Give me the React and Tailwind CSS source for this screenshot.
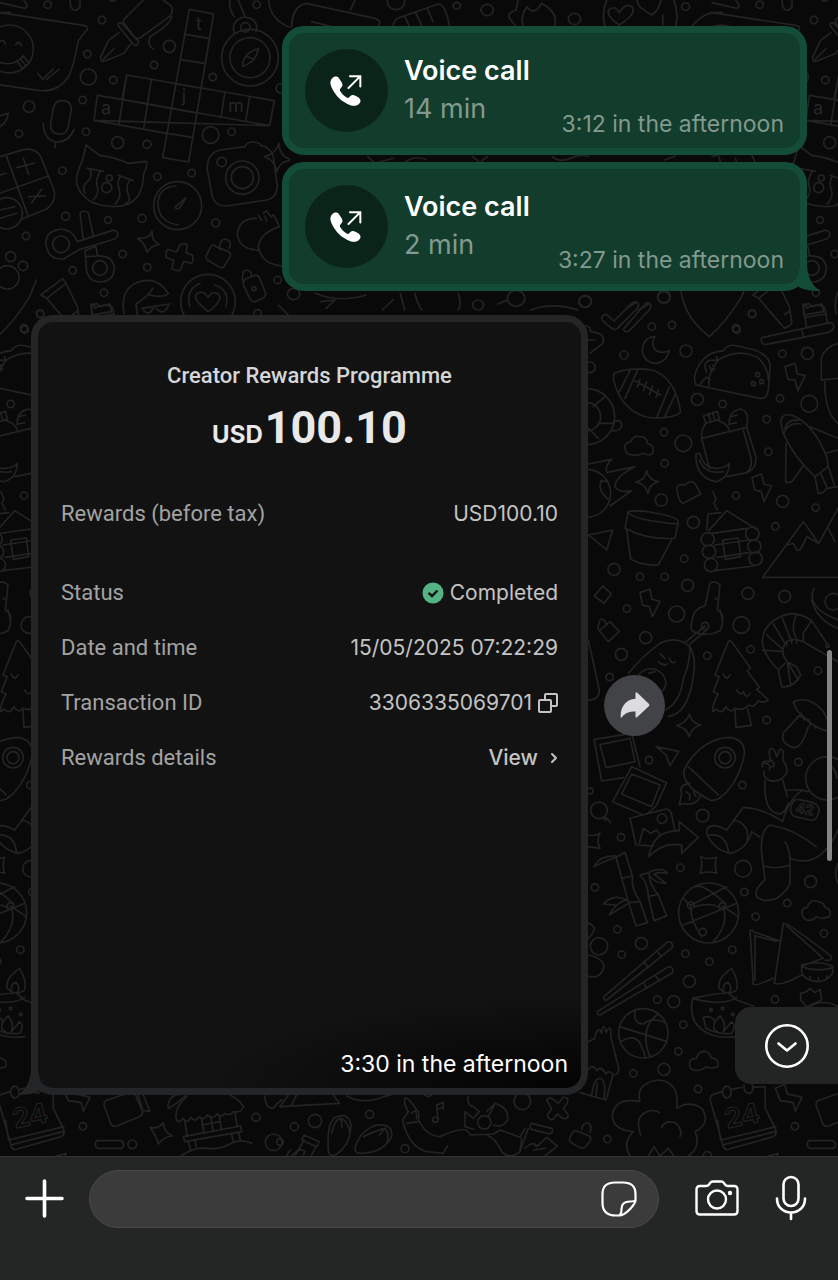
import { ChevronRight } from 'lucide-react'

const CALLS = [
  { id: 1, duration: '14 min', time: '3:12 in the afternoon' },
  { id: 2, duration: '2 min', time: '3:27 in the afternoon' },
]

// Wallpaper doodles, grouped by area. Every area has its own origin and scale.
const AREAS = [
  {
    id: 'top-left',
    transform: 'scale(.3333)',
    dots: [
      [143, 14, 11], [306, 60, 11], [262, 162, 11], [265, 231, 24], [340, 240, 11], [248, 300, 11],
      [87, 320, 17], [57, 401, 11], [258, 395, 11], [353, 428, 18], [441, 433, 12], [462, 195, 11],
      [508, 139, 18], [638, 231, 11], [632, 405, 25], [695, 395, 11], [770, 14, 11], [472, 530, 11],
      [575, 519, 11], [187, 512, 11], [197, 649, 12], [324, 660, 10], [426, 655, 12], [647, 669, 12],
      [78, 708, 11], [368, 762, 11], [218, 811, 11], [442, 802, 11], [312, 878, 11], [120, 941, 11],
      [773, 940, 11], [833, 840, 11], [72, 985, 11], [665, 486, 14], [28, 147, 72], [750, 173, 85],
      [750, 173, 60], [736, 82, 14], [727, 533, 50], [727, 533, 33], [533, 617, 72], [183, 733, 25],
      [300, 804, 22], [22, 832, 35], [32, 770, 15], [69, 798, 14], [20, 640, 47], [624, 905, 82],
      [842, 265, 14], [320, 563, 15], [328, 534, 9], [762, 866, 6],
    ],
    paths: [
      // speech bubble with a laughing face
      'M-5 37L255 77Q265 80 262 88L235 122Q220 200 208 225Q180 275 120 272L-5 254',
      'M0 125Q12 115 16 133M47 135Q58 118 64 138M0 188Q40 200 70 168M52 185L68 206M62 178L78 198M70 168L86 188M113 220L128 238L160 207M139 239L177 208',
      // fountain pen
      'M430 0L372 58Q368 66 375 74L405 112Q412 118 420 114L508 50Q520 40 515 20L490 0M357 80Q350 68 364 68L416 125Q412 142 400 133ZM357 98L325 122L302 172Q300 188 315 183L372 160L392 132M310 178L342 146M515 50Q510 75 450 110Q440 135 460 147',
      // crossword
      'M568 28L641 42L566 486L488 473ZM556 103L627 115M542 179L612 190M529 252L600 264M516 326L588 339M503 400L576 412M380 225L823 302L809 377L282 361L292 286L366 298M380 225L366 298L809 377M380 225L357 372M454 238L431 385M675 276L663 352M749 289L737 364M282 361L500 400M366 298L516 326',
      // microphone
      'M185 302Q218 302 213 335L205 380Q200 405 175 402Q148 398 152 370L160 325Q165 302 185 302M130 370Q130 420 170 426Q205 428 222 388M167 427L164 444',
      // compass ring and needle
      'M703 100Q695 75 712 60Q735 42 760 60Q775 75 768 95M703 50Q685 25 690 0M735 50L715 0M775 146Q770 185 728 199Q728 160 775 146M738 168L762 178',
      // calculator keys
      'M0 470L70 449Q105 442 122 470L162 570Q170 605 140 627L65 658M20 470L85 650M0 580L145 528M50 503L104 489M70 475L86 523M85 590L137 588M95 608L125 568M0 525L18 520M0 630L45 620M0 655L50 640M-4 348L25 340Q20 370 -4 382',
      // cat face
      'M258 435L300 467Q340 470 385 490L440 484Q442 500 430 525Q430 590 385 612Q340 630 275 607Q225 575 230 530Q235 505 248 480Q255 455 258 435M262 505L310 514M355 526L400 542M270 508Q280 530 262 545T255 580M300 514Q285 540 292 560T280 600M360 530Q350 550 358 570T345 612M388 542Q375 565 385 585T375 612',
      // camera
      'M660 450L735 440Q740 425 760 426T782 437Q810 440 820 470L832 560Q830 595 800 600L680 618Q645 618 637 590L622 510Q620 460 660 450M838 430Q835 465 870 478M838 430Q825 465 793 470Q825 480 830 515Q840 485 868 482',
      // stopwatch
      'M528 558Q480 560 474 605Q472 665 535 675M557 594L525 622Q530 630 540 623L557 594',
      // scissors
      'M240 640Q250 628 265 638L280 708M240 640L250 720M232 725L335 692Q355 688 353 708Q350 715 335 720L240 748M232 725Q215 685 178 688Q135 695 138 735Q145 780 190 777L240 748M255 752L288 738L292 768M255 752L260 815Q270 848 305 846Q345 840 343 800Q335 765 292 768L258 770',
      // sparkle, cross, tags and padlock
      'M456 693Q455 725 478 733Q450 738 442 757Q435 730 412 715Q450 718 456 693',
      'M540 735Q552 728 562 735L558 758L578 766Q582 778 575 790L550 785L542 810Q530 815 515 806L522 782L498 772Q496 760 502 748L530 756Z',
      'M660 750Q655 720 675 717Q698 722 688 745M634 738Q640 730 648 740L685 755Q695 760 690 770L672 800Q665 806 656 800L622 780Q615 772 620 765Z',
      'M728 840Q725 812 740 810Q755 812 755 828M735 838L765 826Q775 824 779 835L797 880Q797 890 788 895L765 905Q755 906 750 897L730 855Q728 845 735 838',
      // garlic
      'M770 655Q715 655 712 705Q720 750 775 750M790 640L800 632L812 650L822 645L838 680Q780 700 775 740Q785 795 850 798M775 645L785 660M795 648L800 665',
      // cup
      'M122 885L188 836L198 850L140 895ZM140 895L200 965L218 985Q230 980 240 970L232 920L198 850M218 945L230 935',
      // person and heart badge
      'M372 940Q360 870 410 848Q470 825 505 880Q490 895 450 885M458 865Q450 885 408 912L412 945M425 925L510 912M430 930Q445 950 460 925M468 925Q490 950 505 918M275 920L290 910L300 920L330 912L335 935L275 945Z',
      'M600 850Q555 870 570 920M645 855Q690 870 678 920M624 935Q575 895 590 882Q610 868 624 892Q640 868 658 885Q668 905 624 935',
      'M806 0Q810 60 870 82M210 0L212 20Q225 42 240 20V0M0 8L75 25Q90 20 70 0M325 -4Q338 12 352 -4M835 915L870 950',
    ],
  },
  {
    id: 'top',
    transform: 'translate(270) scale(.362 .3333)',
    dots: [
      [348, 5, 24], [516, 17, 10], [600, 30, 17], [841, 57, 17], [1148, 20, 11],
      [65, 882, 17], [575, 915, 15], [870, 905, 17], [1088, 892, 17], [680, 895, 24],
    ],
    paths: [
      'M60 80Q60 20 100 10L290 55Q310 65 300 75M115 65L170 80M235 0L222 30',
      'M340 80Q340 60 360 52L465 12Q485 15 495 75M372 48L385 80M402 38L420 78M435 25L450 65',
      'M665 60Q650 40 680 30L685 0M700 80Q690 50 710 20Q730 50 750 10Q800 40 785 80M665 60L680 80',
      'M925 80Q915 40 930 0M1120 80Q1130 40 1115 0M965 75Q925 45 937 28Q955 15 965 38Q980 8 1000 20Q1015 40 965 75M1055 45Q1010 20 1015 0M1085 75V45M1055 45Q1075 30 1080 0',
      'M1165 80Q1200 30 1250 38M270 470L290 490L340 475M370 488Q400 465 430 478M560 470L580 488L600 470M780 470Q800 490 830 475T880 470M1090 480L1120 468',
      'M125 880Q190 910 265 885M140 905L180 900L155 925M360 880L372 930M400 880Q410 920 420 930M520 880Q530 910 520 930M630 912L655 900M720 930Q780 905 850 930M985 925L1010 908M1020 930L1048 910M310 930L340 900',
    ],
  },
  {
    id: 'right-upper',
    transform: 'translate(580 290) scale(.3333)',
    dots: [
      [16, 34, 18], [252, 20, 19], [215, 110, 11], [276, 105, 11], [132, 195, 12], [318, 183, 18],
      [517, 72, 11], [470, 119, 11], [607, 191, 11], [682, 190, 18], [352, 328, 18], [428, 342, 11],
      [252, 427, 11], [310, 460, 25], [254, 520, 11], [560, 388, 11], [565, 485, 11], [600, 325, 11],
      [688, 341, 25], [468, 617, 11], [608, 634, 18], [707, 653, 11], [244, 630, 18], [340, 697, 18],
      [586, 709, 11], [313, 806, 11], [102, 838, 18], [180, 860, 11], [254, 860, 11], [323, 886, 18],
      [504, 910, 18], [614, 919, 18], [141, 956, 11], [290, 972, 24], [760, 935, 25],
      [533, 254, 6], [520, 281, 6], [545, 275, 6], [30, 232, 16], [383, 748, 20], [387, 785, 20],
      [393, 825, 20], [517, 731, 20], [523, 769, 20], [527, 806, 20], [20, 380, 42], [20, 380, 84], [20, 610, 72],
    ],
    paths: [
      // double tick and moon
      'M66 82Q72 68 83 76L102 93L155 40Q168 30 175 42Q178 50 170 57L112 115Q102 122 92 113L68 92Q64 88 66 82M130 118L195 42Q208 34 212 46Q213 53 208 60L148 122Q137 130 130 118',
      'M225 140Q190 142 187 180Q190 218 228 220Q262 215 268 182Q240 195 222 175Q213 155 225 140',
      // paw heel
      'M300 -45Q295 70 388 140Q440 95 485 20L505 -30',
      // toothbrush
      'M545 143L750 98Q765 100 760 115Q755 125 745 127L560 163Q540 165 545 143M665 118L670 138M680 112L668 45Q680 35 680 55Q715 35 735 55L742 98M676 82L738 72',
      // football
      'M103 250Q150 230 215 240Q285 260 302 365Q290 385 215 384Q125 370 100 268ZM152 238L118 305M175 236L135 325M268 292L230 382M285 315L252 384M165 272L242 315M180 268L172 292M200 275L190 302M218 288L208 315M236 298L228 322',
      // taco
      'M348 285Q335 260 360 220Q385 185 430 182Q445 160 475 168T525 180Q575 200 570 235L565 300Q560 328 540 325ZM388 288Q380 255 415 210Q470 175 530 200Q565 230 565 270M360 285Q380 250 390 270M380 245Q365 215 395 210Q415 215 410 200M388 228L396 245M398 225L404 240',
      // bolts
      'M615 230L645 220L652 252L676 256L654 302L645 270L624 268ZM516 563L545 552L552 582L575 588L552 636L543 604L524 600ZM180 908L210 897L216 928L240 934L217 980L208 950L188 946Z',
      // backpack with a banana
      'M370 378L412 364L418 388L378 400ZM385 370L392 396M398 367L405 392M378 400Q362 420 365 445L388 535M365 445L500 412L528 500Q530 535 505 547L440 560M410 390Q445 400 450 425M488 415L512 500Q520 530 500 547M448 405Q445 365 480 357Q510 360 500 412M455 380L472 375M452 402L470 398M348 492L360 490Q370 535 410 535Q435 535 448 520Q445 570 405 575Q345 560 348 492M358 510Q375 555 430 545',
      // cloud and puff
      'M140 490Q125 460 152 455Q160 435 180 440Q200 440 202 460Q225 465 218 490Q205 500 190 490Q165 502 140 490M292 605Q285 580 315 585Q330 570 345 580L362 612L310 640Q295 635 292 605M398 605L408 625L402 640L413 660',
      // shuttle
      'M603 400Q600 370 635 375Q700 400 740 500L745 530L705 560Q640 500 610 430ZM612 430Q625 395 662 402M615 415Q625 385 655 392M690 410L774 445M735 490L774 480M618 460L617 575Q630 582 640 570L668 530M705 560L715 610Q730 612 740 595L774 590M745 530L765 590M722 550L740 590',
      // sparkle and burning ball
      'M200 542Q205 570 235 575Q207 582 204 610Q195 580 167 576Q197 570 200 542',
      'M25 522L95 508Q75 525 80 548L165 530Q105 560 105 590Q120 610 155 602L90 648M65 570Q50 600 85 628M62 574H80',
      // plant pot
      'M145 665Q160 660 210 666Q295 680 295 695L285 745Q200 750 135 715ZM145 668Q160 690 290 702M140 718L152 808Q190 828 235 825L275 750',
      // cabin
      'M380 720L384 672L422 668M386 722L440 662L530 718M395 730L502 715M405 765L505 750M410 802L508 788M405 842L520 828M428 750L475 744L482 800L436 808Z',
      // mountains
      'M774 862H548L670 695L716 760L774 655M622 765L640 760L650 780Q660 790 680 740L716 760M745 715L765 755',
      // small shapes
      'M25 735L98 720L80 780ZM68 888L94 912L72 940L43 918ZM390 880Q405 870 420 885L412 960Q430 970 428 990M390 880L375 948Q340 955 337 990M405 925L415 930M702 895Q675 950 774 990M724 270L774 265M724 270V205Q735 170 774 160M734 275Q735 370 774 400',
      'M0 110Q30 100 32 125Q80 130 68 160L30 190M25 150H45M100 395Q125 385 125 408Q120 425 95 422M20 410L55 445M55 400H103M40 350L75 320',
    ],
  },
  {
    id: 'right-middle',
    transform: 'translate(580 600) scale(.3333)',
    dots: [
      [197, 113, 18], [124, 163, 18], [89, 231, 11], [382, 167, 11], [484, 75, 25], [512, 148, 11],
      [714, 212, 11], [560, 360, 11], [655, 486, 11], [207, 480, 11], [487, 555, 11], [368, 647, 19],
      [123, 712, 11], [301, 803, 11], [489, 806, 25], [493, 876, 11], [692, 845, 18], [622, 909, 11],
      [45, 862, 11], [527, 950, 11], [435, 473, 31], [435, 473, 18], [386, 939, 90], [332, 916, 10],
      [428, 918, 10], [57, 631, 25], [375, 78, 11], [742, 535, 65], [30, 573, 9], [246, 656, 14],
      [743, 137, 5],
    ],
    paths: [
      // guitar and avocado
      'M337 60Q325 95 350 98Q385 110 420 92Q435 70 420 30M375 78L318 125M382 88L330 132',
      'M145 220Q190 165 240 130Q290 105 330 140Q350 170 340 230Q325 340 265 350M330 140Q330 190 310 235Q300 310 255 330M240 160L255 175M268 175Q275 195 285 185M235 185Q250 200 262 192M175 225Q210 190 245 220Q270 250 245 275M205 220L225 215',
      // shrimp
      'M740 130L695 62Q650 30 605 48Q545 75 547 130Q555 170 595 210L605 260Q640 265 662 225L650 200L622 185Q600 160 615 130Q635 110 670 125L774 185M547 150L610 155M560 105L605 145M580 72L615 130M605 48L632 118M650 42Q630 90 650 115M695 62L670 100V125M622 185L632 255M622 185L655 240M595 210L615 190M620 125V138M635 118V130M650 118V130',
      // pine tree
      'M445 125Q450 118 458 130L512 205L502 212L538 262L530 268L565 300Q550 312 535 302Q525 325 505 315Q490 335 465 325Q450 342 438 320Q425 345 410 328L398 335Q398 310 415 282L400 275L418 230L405 225ZM465 330L468 382L514 376L503 328M430 222Q440 245 450 225M470 270Q480 290 490 275Q500 300 510 280',
      // mushroom
      'M640 305Q690 285 730 335Q755 375 745 395Q700 385 650 330ZM665 340L610 398Q600 430 640 443Q665 445 685 380M652 350Q670 345 672 360Q690 350 690 375Q705 370 705 385',
      // photos
      'M42 418L155 400L180 500M42 418L65 543L130 533M60 434L150 415L165 485L78 503ZM155 500L260 548L230 615Q210 640 190 645L98 605ZM155 522L240 555L215 620L125 582ZM150 655L255 628Q270 625 275 645L285 692M150 655L168 735L220 738M178 730L190 685L212 700L230 690L240 705M75 650L92 668M68 655L78 660',
      // arrows and sparkles
      'M228 440L297 454L270 497L258 465ZM206 770Q220 690 298 692V665L355 712L305 760V735Q250 725 206 770M328 343Q335 370 362 375Q335 382 328 410Q318 382 290 377Q318 370 328 343M362 770Q385 780 410 772Q402 795 410 820Q385 812 360 820Q370 795 362 770M25 705Q45 710 60 700Q48 720 60 745L25 740',
      // rocket
      'M320 495Q370 415 450 412Q500 420 492 470Q470 560 415 597L395 602Q305 560 312 510ZM325 500L415 585M330 550Q295 555 305 580L298 615Q310 610 318 612Q350 615 360 590M318 575L330 585L328 600M340 575L348 590',
      // astronaut
      'M548 500Q540 480 570 485L568 450Q580 435 590 470L600 448Q615 445 608 480Q625 500 620 520Q600 550 570 542Q550 535 552 515M552 490Q575 490 568 510M575 480Q590 500 575 500M555 540Q550 640 600 642Q615 640 625 610M608 540L622 590M620 570H665L685 575M665 572Q625 600 608 665Q550 625 490 622L440 690Q380 660 380 700Q400 750 450 760Q500 750 515 695L540 712M460 660Q510 670 502 725M385 705Q440 700 445 755M708 740Q650 690 570 675Q540 690 545 760L555 840Q520 870 530 890Q550 910 590 895Q625 870 630 850V775Q630 750 615 725M552 798Q590 810 630 795M630 775Q720 810 774 690M655 598L700 608Q722 618 715 640Q710 665 690 660L645 650Q625 640 635 615Q640 598 655 598M755 500Q770 515 770 535M774 790Q760 820 774 850',
      // bamboo
      'M108 772L135 757L158 830Q150 860 180 905L202 968L168 978L145 905Q130 850 125 835ZM125 835L158 828M145 908L180 905M42 800Q60 765 108 768V772Q70 785 42 800M180 825L208 818Q205 850 235 885L260 948L222 962L205 890Q205 850 180 825M205 890L235 882M210 815Q250 800 262 820Q240 815 222 822L258 850Q225 850 212 830M70 912Q100 880 140 900Q110 905 88 945L142 912M70 912L105 915',
      // globe and cloud
      'M310 895L332 916L440 860M332 916Q330 960 365 1010M428 918L475 950M342 920Q400 905 420 925M345 860Q370 850 435 910M428 918Q450 970 400 1025M310 975L470 910M672 955Q655 925 682 922Q690 895 715 905Q735 910 733 920Q758 930 748 950Q725 960 710 950Q690 970 672 955',
      // tag and edges
      'M58 68Q60 50 75 62L80 75M58 92L90 65L118 95L85 125ZM58 92Q50 80 58 68M25 120L58 270Q58 300 25 300M695 0Q710 60 774 85',
    ],
  },
  {
    id: 'right-lower',
    transform: 'translate(580 900) scale(.3333)',
    dots: [
      [112, 88, 11], [184, 130, 18], [57, 139, 26], [125, 164, 11], [316, 161, 11], [457, 149, 11],
      [388, 185, 11], [328, 244, 18], [732, 100, 11], [232, 299, 11], [281, 305, 18], [585, 298, 11],
      [310, 374, 11], [295, 454, 11], [252, 508, 18], [160, 520, 11], [354, 567, 11], [645, 679, 11],
      [190, 400, 74], [368, 96, 11], [82, 717, 11], [393, 330, 4], [428, 325, 4], [458, 343, 4], [382, 767, 12],
    ],
    paths: [
      // chopsticks
      'M72 290L260 128Q278 120 278 142L80 300Q70 302 72 290M190 185L205 202M230 152L245 170M52 335L265 200Q282 200 278 218L60 345Q50 345 52 335M190 248L200 265M225 225L238 243',
      // basketball
      'M118 380L262 425M165 335Q160 370 190 372Q220 350 255 368M122 425Q165 400 180 430T195 472M235 342Q175 385 210 470',
      // party hat house
      'M45 410Q55 375 65 400Q70 360 78 398Q95 365 92 410L115 500Q120 525 100 525Q88 508 78 522Q62 495 50 512Q38 490 25 508M45 415L25 425M98 528L78 600L0 578M35 588Q40 535 60 535Q80 540 72 595M48 590L52 550',
      // oil lamp
      'M455 205Q480 250 468 272Q440 290 418 265Q410 235 455 205M432 280Q425 250 445 248Q460 265 445 280L470 300L520 318M338 295Q430 275 432 282M338 295Q430 320 470 292M338 295Q320 375 395 405Q430 415 470 410M370 352Q395 345 405 365L420 348Q440 370 430 395L455 365Q470 380 455 400Q415 405 378 385ZM405 365Q395 390 412 395',
      // samosas and bowl
      'M510 92Q515 88 520 95L598 122M510 92L520 252Q525 260 580 235M525 105V240M528 108L590 124M583 250L610 70Q620 65 755 170Q755 185 735 180M583 250Q600 260 665 225M620 78L730 175L665 198M665 195Q710 180 758 198V220Q740 245 710 245Q670 240 665 215ZM665 200Q710 218 758 203M690 230V240M715 232V243M740 228V238M662 280L680 275L690 265L705 278L720 268L725 300L680 320L662 300ZM690 320Q730 295 774 320',
      // clouds
      'M332 505Q320 475 350 475Q355 450 380 455Q395 465 392 472Q420 478 413 500Q395 508 380 500Q350 520 332 505',
      // popcorn
      'M160 695Q98 690 97 645Q105 590 180 605Q165 550 235 540Q300 545 290 625Q330 600 365 625Q395 670 345 695Q365 740 325 768M160 695Q125 730 150 768M182 705Q160 645 210 632Q230 630 238 638M245 682Q255 660 285 668Q310 690 300 710M205 768L222 740L240 768L265 745L282 768',
      // tear-off calendar
      'M425 575L395 585Q388 595 392 605L430 740Q435 752 445 748L580 710Q590 705 588 690L556 625L555 560L520 562M455 568L485 562M412 660L422 720L588 680M428 735L585 695M430 565Q445 550 452 570Q458 590 440 595Q422 585 430 565M492 555Q490 580 510 580Q525 570 515 550',
      'M560 770L595 760L588 775M25 70Q60 80 25 115M25 165Q70 175 72 200Q60 240 25 228',
    ],
  },
  {
    id: 'bottom-left',
    transform: 'translate(0 1040) scale(.3333)',
    dots: [[397, 313, 13], [768, 232, 12], [821, 307, 25], [883, 260, 12]],
    paths: [
      // bolt, ticket and pill
      'M190 145L218 133L226 162L250 167L270 172L250 213L243 188L228 185L205 182ZM312 195Q312 180 330 178L410 150L428 210Q430 225 415 232L350 258Q335 262 330 245ZM405 160L425 210L450 215L430 165M290 302H362Q371 305 371 314T362 325H295Q285 322 286 313T290 302',
      'M490 248Q490 275 517 288Q490 290 475 312Q470 290 450 262Q475 268 490 248M505 205Q500 180 525 165L560 162M505 205Q520 200 560 165',
      // bungalow
      'M560 170Q525 200 528 235Q535 255 550 235Q560 255 572 232Q585 250 598 230Q610 245 622 225Q640 240 650 222Q665 235 675 220Q690 230 700 215Q725 220 730 200Q720 180 690 165M555 248L562 290M550 290L722 258L725 275L555 305ZM605 235L612 280M632 230L640 275M658 225L664 270M605 255L660 245M705 220L712 258M565 305L572 330M585 302L590 325M695 282L700 305M715 278L722 303M540 350Q580 320 620 325T690 312T755 310',
      'M795 168Q795 205 820 205Q830 190 845 180M840 200L865 165M875 348L900 325',
    ],
  },
  {
    id: 'bottom-middle',
    transform: 'translate(280 1040) scale(.3333)',
    dots: [
      [105, 243, 20], [269, 223, 12], [375, 326, 12], [613, 247, 20], [466, 239, 8], [727, 184, 25], [0, 306, 10],
    ],
    paths: [
      'M0 200L178 190L160 165M35 195L50 165M200 168Q250 195 310 170L350 160M435 165Q445 175 455 165',
      // slippers
      'M145 330Q140 250 165 232Q205 215 213 255Q210 320 165 345Q145 350 145 330M155 280Q165 235 183 235Q205 245 210 280M183 235L186 262M225 325Q240 270 290 255Q340 250 335 290Q310 340 240 340Q225 340 225 325M250 290Q290 270 315 265Q330 280 320 310M315 265L298 285',
      // dancer and music note
      'M375 175Q385 170 410 210Q420 215 415 240Q440 290 480 290Q530 265 560 270L572 285L640 282L660 270L720 292L735 265M375 175Q370 195 385 215L368 240Q385 320 440 335L490 340L502 318M380 250L415 245M395 220Q410 200 410 235M565 170Q560 195 580 200L598 215L580 235L555 215L555 260L580 268M620 215L645 190Q690 205 682 240Q670 265 640 255M645 190L625 230M622 285Q650 300 665 335Q690 360 720 335L725 295M474 238L470 195L490 188V208M470 208L490 202',
      'M20 348L30 330M45 345Q60 320 75 335L70 345M65 300L72 285L118 305L110 320ZM72 300L50 340M108 320L95 345',
      'M800 180Q808 168 820 178L835 190L850 172Q868 170 862 190L850 205L865 225Q862 240 848 235L832 222L820 238Q805 242 802 225L815 207ZM755 250L815 265Q822 275 810 282L755 268Q745 258 755 250M745 265L722 330M735 325Q760 300 770 320L800 292L832 318L795 348M760 330L795 325M905 268Q910 245 925 250Q938 258 930 278M878 278Q884 268 893 274L928 288Q935 294 931 302L915 322Q905 330 872 306Q862 298 878 278',
    ],
  },
]

function Wallpaper() {
  return (
    <svg className="absolute inset-0 h-full w-full" aria-hidden="true" fill="none" stroke="#232323" strokeWidth="5" strokeLinecap="round" strokeLinejoin="round">
      <defs>
        <g id="doodles">
          {AREAS.map((area) => (
            <g key={area.id} transform={area.transform}>
              {area.dots.map(([cx, cy, r]) => (
                <circle key={`${cx}-${cy}-${r}`} cx={cx} cy={cy} r={r} />
              ))}
              {area.paths.map((d) => (
                <path key={d} d={d} />
              ))}
            </g>
          ))}
          <g className="font-[Inter,sans-serif] text-[18px]" stroke="none" fill="#262626" textAnchor="middle">
            <text x="199" y="30">t</text>
            <text x="106" y="114">a</text>
            <text x="184" y="102">j</text>
            <text x="236" y="112">m</text>
          </g>
          <g className="font-[Inter,sans-serif] font-bold" strokeWidth="1" textAnchor="middle">
            <text className="text-[27px]" transform="translate(744 1125) rotate(-12)">24</text>
            <text className="text-[14px]" transform="translate(804 814) rotate(10)">42</text>
          </g>
        </g>
      </defs>
      <use href="#doodles" x="-712" />
      <use href="#doodles" />
      <use href="#doodles" x="712" />
    </svg>
  )
}

function OutgoingCallIcon() {
  return (
    <svg viewBox="0 0 84 84" className="size-full" aria-hidden="true">
      <path
        fill="#fff"
        d="M27.5 29.6C29.6 27.2 33 27.4 34.6 29.8L37.2 34C38.4 36 38.1 37.8 36.6 39.3C35.1 40.7 35 41.5 35.9 43C37.6 45.6 39.7 47.6 42.2 49.2C43.3 49.9 44.2 49.7 45.2 48.4C46.8 46.3 48.8 45.9 51 47.2L54.2 49.2C56.7 50.9 56.8 53.5 54.8 55.5C52.4 58 48.8 58 45.2 56.6C36.5 53.2 30.2 46.6 26.6 38.2C25.2 34.9 25.3 31.9 27.5 29.6Z"
      />
      <path d="M44 39.5L55.5 28M45.5 27.5H56V38" fill="none" stroke="#fff" strokeWidth="2" strokeLinecap="round" />
    </svg>
  )
}

function CallBubble({ call, tail }) {
  return (
    <article className="relative flex w-full max-w-[525px] items-start gap-4 rounded-[22px] border-7 border-[#134d37] bg-[#123c2c] p-4">
      <div className="size-[83px] shrink-0 rounded-full bg-[#0a2419]">
        <OutgoingCallIcon />
      </div>
      <div className="flex-1 pt-1">
        <h2 className="text-[27px] leading-9 font-semibold text-white">Voice call</h2>
        <p className="text-[27px] leading-10 text-[#82998f]">{call.duration}</p>
      </div>
      <time className="absolute right-4 bottom-2 text-[23px] leading-8 text-[#82998f]">{call.time}</time>
      {tail && (
        <svg className="absolute -right-5 -bottom-[7px] h-7 w-6" viewBox="0 0 24 28" aria-hidden="true">
          <path fill="#134d37" d="M11 0C11 12 15 22 24 28C16 28 8 27 3 24L0 20L5 0Z" />
        </svg>
      )}
    </article>
  )
}

function CheckBadge() {
  return (
    <svg viewBox="0 0 22 22" className="size-[22px]" aria-hidden="true">
      <circle cx="11" cy="11" r="10.5" fill="#55b283" />
      <path d="M6.5 10.8L10 14L15.5 8.5" fill="none" stroke="#121212" strokeWidth="2.4" />
    </svg>
  )
}

function CopyIcon() {
  return (
    <svg viewBox="0 0 20 20" className="size-5" fill="none" stroke="#c4c4c4" strokeWidth="2" strokeLinejoin="round" aria-hidden="true">
      <rect x="1" y="7" width="12" height="12" rx="1" />
      <path d="M7 7V2Q7 1 8 1H18Q19 1 19 2V12Q19 13 18 13H13" />
    </svg>
  )
}

function Row({ label, children }) {
  return (
    <div className="flex items-center justify-between">
      <dt className="font-[Roboto,sans-serif] text-[22px] leading-8 text-[#a3a3a3]">{label}</dt>
      <dd className="flex items-center gap-1.5 text-[21px] leading-8 text-[#c4c4c4]">{children}</dd>
    </div>
  )
}

function RewardCard() {
  return (
    <article className="relative w-full max-w-[557px] rounded-[22px] border-7 border-[#232527] bg-[#121212] bg-[radial-gradient(70%_12%_at_bottom_right,#030303,#121212)]">
      <div className="flex min-h-[766px] flex-col px-[23px] pt-[38px]">
        <h2 className="text-center font-[Roboto,sans-serif] text-[22px] leading-8 font-medium text-[#d6d6d6]">Creator Rewards Programme</h2>
        <p className="mt-1 flex items-baseline justify-center gap-0.5 font-bold text-[#e9e9e9]">
          <span className="text-2xl">USD</span>
          <span className="font-[Roboto,sans-serif] text-[45px] leading-16">100.10</span>
        </p>
        <dl className="mt-[38px]">
          <Row label="Rewards (before tax)">USD100.10</Row>
          <div className="mt-[47px] flex flex-col gap-[23px]">
            <Row label="Status">
              <CheckBadge />
              Completed
            </Row>
            <Row label="Date and time">15/05/2025 07:22:29</Row>
            <Row label="Transaction ID">
              3306335069701
              <button type="button" aria-label="Copy transaction ID">
                <CopyIcon />
              </button>
            </Row>
            <Row label="Rewards details">
              <button type="button" className="-mr-1 flex items-center gap-2 font-medium">
                View
                <ChevronRight size={16} strokeWidth={3} />
              </button>
            </Row>
          </div>
        </dl>
        <time className="mt-auto -mr-2.5 self-end pb-2 text-[23px] leading-8 text-white">3:30 in the afternoon</time>
      </div>
      <svg className="absolute -bottom-[7px] -left-5 h-7 w-6" viewBox="0 0 24 28" aria-hidden="true">
        <path fill="#232527" d="M13 0C13 12 9 22 0 28C8 28 16 27 21 24L24 20L19 0Z" />
      </svg>
    </article>
  )
}

function Composer() {
  return (
    <footer className="relative flex h-[124px] items-start border-t border-[#333535] bg-[#242626] pt-[13px] pr-[31px] pl-[25px] text-white">
      <button type="button" aria-label="Attach" className="flex h-14 shrink-0 items-center">
        <svg viewBox="0 0 39 39" className="size-[39px]" fill="none" stroke="currentColor" strokeWidth="3.6" strokeLinecap="round" aria-hidden="true">
          <path d="M19.5 2V37M2 19.5H37" />
        </svg>
      </button>
      <div className="ml-[25px] flex h-[58px] min-w-0 flex-1 items-center rounded-full border border-[#474949] bg-[#3b3b3b] pr-[21px] pl-6">
        <input type="text" aria-label="Message" className="min-w-0 flex-1 bg-transparent text-2xl outline-none" />
        <button type="button" aria-label="Stickers">
          <svg viewBox="0 0 36 36" className="size-9" fill="none" stroke="currentColor" strokeWidth="2.2" strokeLinejoin="round" aria-hidden="true">
            <path d="M14 1.5H22C30 1.5 34.5 5.5 34.5 13V19C34.5 23 25 34.5 18 34.5H15C6 34.5 1.5 30.5 1.5 22V13C1.5 5.500 6 1.500 14 1.500Z" />
            <path d="M34.5 19C34 20.500 32 20.500 29 20.500C22.500 20.500 20.500 23.500 20.500 28C20.500 31 20.500 33.500 18 34.500" />
          </svg>
        </button>
      </div>
      <button type="button" aria-label="Camera" className="ml-9 flex h-14 shrink-0 items-center">
        <svg viewBox="0 0 44 36" className="h-9 w-11" fill="none" stroke="currentColor" strokeWidth="2.4" strokeLinejoin="round" aria-hidden="true">
          <path d="M5 6H11Q13 6 14 4.500L15.500 2.500Q16.500 1.500 18 1.500H26Q27.500 1.500 28.500 2.500L30 4.500Q31 6 33 6H39Q42.500 6 42.500 9.500V31Q42.500 34.500 39 34.500H5Q1.500 34.500 1.500 31V9.500Q1.500 6 5 6Z" />
          <circle cx="22" cy="19.500" r="9" />
          <circle cx="35" cy="13" r="2.200" fill="currentColor" stroke="none" />
        </svg>
      </button>
      <button type="button" aria-label="Record voice message" className="ml-9 flex h-14 shrink-0 items-center">
        <svg viewBox="0 0 32 46" className="h-[46px] w-8" fill="none" stroke="currentColor" strokeWidth="2.600" strokeLinecap="round" aria-hidden="true">
          <rect x="8.500" y="2" width="15" height="29" rx="7.500" />
          <path d="M2 23.500C2 32 8 37.500 16 37.500S30 32 30 23.500M16 37.500V44" />
        </svg>
      </button>
    </footer>
  )
}

export default function App() {
  return (
    <div className="flex min-h-screen flex-col bg-[#090909] font-[Inter,'Liberation_Sans',sans-serif]">
      <main className="relative flex flex-1 flex-col overflow-hidden px-[31px] pt-[26px] pb-[61px]">
        <Wallpaper />
        <section className="relative flex flex-col items-end gap-[7px]">
          {CALLS.map((call, i) => (
            <CallBubble key={call.id} call={call} tail={i === CALLS.length - 1} />
          ))}
        </section>
        <section className="relative mt-6 flex items-center gap-4">
          <RewardCard />
          <button type="button" aria-label="Forward" className="flex size-[61px] shrink-0 items-center justify-center rounded-full bg-[#424346]">
            <svg viewBox="0 0 30 26" className="h-[26px] w-[30px]" fill="#dcdcde" aria-hidden="true">
              <path d="M15.500 1.500Q15.500 -.5 17.300 .8L28.800 11.700Q30 13 28.800 14.300L17.300 25Q15.500 26.500 15.500 24.300V19.500C9 19.500 5 21 2.200 25Q.8 26.500 .6 24.500C.8 14 6 7.500 15.500 6.800Z" />
            </svg>
          </button>
        </section>
        {/* scrollbar thumb */}
        <div className="absolute top-[650px] right-1.5 h-[211px] w-[5px] rounded-full bg-[#858585]" />
        <button type="button" aria-label="Scroll to latest" className="absolute right-0 bottom-18 flex h-[77px] w-[103px] items-center justify-center rounded-l-2xl bg-[#232524]">
          <svg viewBox="0 0 46 46" className="size-[46px]" fill="none" stroke="#fff" strokeWidth="2.600" strokeLinecap="round" strokeLinejoin="round" aria-hidden="true">
            <circle cx="23" cy="23" r="20.700" />
            <path d="M14.500 20.500L23 27.500L31.500 20.500" />
          </svg>
        </button>
      </main>
      <Composer />
    </div>
  )
}
